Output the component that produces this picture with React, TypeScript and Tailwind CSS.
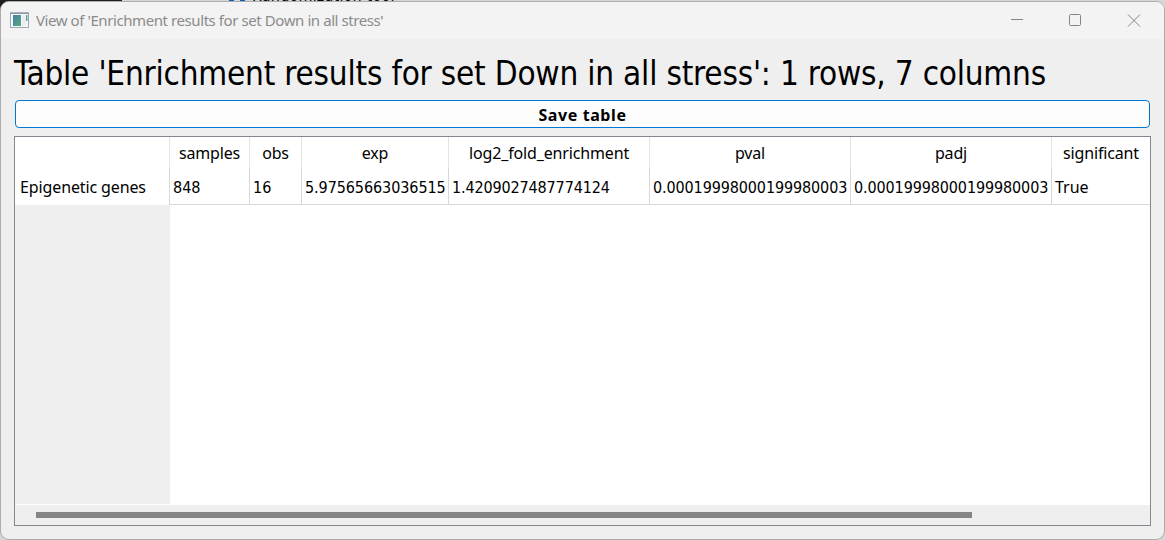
const columns = [
  { name: 'samples', value: '848', width: 'w-[80px]', edge: 'border-r', text: '' },
  { name: 'obs', value: '16', width: 'w-[52px]', edge: 'border-r', text: '' },
  { name: 'exp', value: '5.97565663036515', width: 'w-[147px]', edge: 'border-r', text: 'tracking-[-0.08px]' },
  { name: 'log2_fold_enrichment', value: '1.4209027487774124', width: 'w-[201px]', edge: 'border-r', text: 'tracking-[-0.14px]' },
  { name: 'pval', value: '0.00019998000199980003', width: 'w-[201px]', edge: 'border-r', text: 'tracking-[-0.12px]' },
  { name: 'padj', value: '0.00019998000199980003', width: 'w-[201px]', edge: 'border-r', text: 'tracking-[-0.12px]' },
  { name: 'significant', value: 'True', width: 'w-[98px]', edge: '', text: "-mt-[2px] font-['Noto_Sans',sans-serif]" },
];

function TitleBar() {
  return (
    <header className="flex h-[37px] shrink-0 items-center bg-[#f3f3f3] pl-[9px] font-['Noto_Sans',sans-serif] text-[#8b8b8b]">
      <svg width="20" height="17" viewBox="0 0 20 17" className="shrink-0">
        <defs>
          <linearGradient id="pane" x1="0" y1="0" x2="1" y2="1">
            <stop offset="0" stopColor="#4a7ea8" />
            <stop offset="1" stopColor="#55aa7b" />
          </linearGradient>
        </defs>
        <rect x="0.5" y="1" width="18" height="14.5" fill="#f7f8fa" stroke="#a0a6b3" />
        <rect x="0" y="0.5" width="19" height="1.5" fill="#8f96a6" />
        <rect x="3" y="3" width="8" height="11" fill="url(#pane)" />
        <rect x="12" y="3" width="4" height="11" fill="#eceff2" />
        <rect x="16" y="3" width="1.5" height="6" fill="#5aa694" />
      </svg>
      <span className="ml-[6px] whitespace-nowrap text-[15px] tracking-[-0.42px]">
        View of 'Enrichment results for set Down in all stress'
      </span>
      <svg width="130" height="13" viewBox="0 0 130 13" className="ml-auto mr-[23px] shrink-0" fill="none" stroke="#858585">
        <path d="M0 5.5h12" />
        <rect x="58.5" y="0.5" width="11" height="11" rx="1" />
        <path d="M117 0.5l12 12M129 0.5l-12 12" />
      </svg>
    </header>
  );
}

function Table() {
  return (
    <div className="mt-[8px] flex h-[390px] w-[1137px] flex-col overflow-hidden border border-[#828790] bg-white text-[16px]">
      <div className="flex h-[31px] shrink-0 font-['Noto_Sans',sans-serif]">
        <div className="w-[155px] shrink-0 border-r border-[#e5e5e5]" />
        {columns.map((c) => (
          <div key={c.name} className={`flex shrink-0 items-center justify-center border-[#e5e5e5] ${c.width} ${c.edge}`}>
            <span className="whitespace-nowrap tracking-[-0.15px]">{c.name}</span>
          </div>
        ))}
      </div>
      <div className="flex h-[37px] shrink-0">
        <div className="flex w-[155px] shrink-0 items-center border-r border-[#d8d8d8] pt-px pl-[5px] font-['Noto_Sans',sans-serif]">
          <span className="whitespace-nowrap tracking-[-0.12px]">Epigenetic genes</span>
        </div>
        {columns.map((c) => (
          <div key={c.name} className={`flex shrink-0 items-center border-b border-[#d8d8d8] pt-[3px] pl-[3px] ${c.width} ${c.edge}`}>
            <span className={`whitespace-nowrap ${c.text}`}>{c.value}</span>
          </div>
        ))}
      </div>
      <div className="h-[299px] w-[155px] shrink-0 bg-[#efefef]" />
      <div className="mt-[1px] flex h-[20px] shrink-0 items-center bg-[#efefef] pl-[21px]">
        <div className="h-[6px] w-[936px] bg-[#868686]" />
      </div>
    </div>
  );
}

export default function App() {
  return (
    <div className="relative h-[540px] w-[1165px] overflow-hidden bg-[#d6d6d6] font-['DejaVu_Sans_Condensed','DejaVu_Sans',sans-serif] text-black">
      <div className="absolute left-0 top-0 h-[41px] w-[122px] bg-[#1f1f1f]" />
      <div className="absolute left-[229px] top-0 h-[2px] w-[5px] bg-[#0f5fae]" />
      <div className="absolute left-[240px] top-0 h-[2px] w-[5px] bg-[#0f5fae]" />
      <div className="absolute left-[252px] top-[-14px] whitespace-nowrap text-[16px] leading-[20px] tracking-[0.18px]">Randomization tool</div>
      <div className="absolute left-0 top-px flex h-[539px] w-[1165px] flex-col overflow-hidden rounded-[9px] border border-[#adadad] bg-[#efefef]">
        <TitleBar />
        <main className="flex flex-col pl-[13px]">
          <h1 className="mt-[12px] flex h-[46px] items-center whitespace-nowrap text-[33px] tracking-[-0.21px]">
            Table 'Enrichment results for set Down in all stress': 1 rows, 7 columns
          </h1>
          <button className="ml-[1px] mt-[3px] h-[28px] w-[1135px] rounded-[4px] border border-[#0078d4] bg-[#fdfdfd] pt-px font-['Noto_Sans',sans-serif] text-[16px] font-bold tracking-[0.6px]">
            Save table
          </button>
          <Table />
        </main>
      </div>
    </div>
  );
}
